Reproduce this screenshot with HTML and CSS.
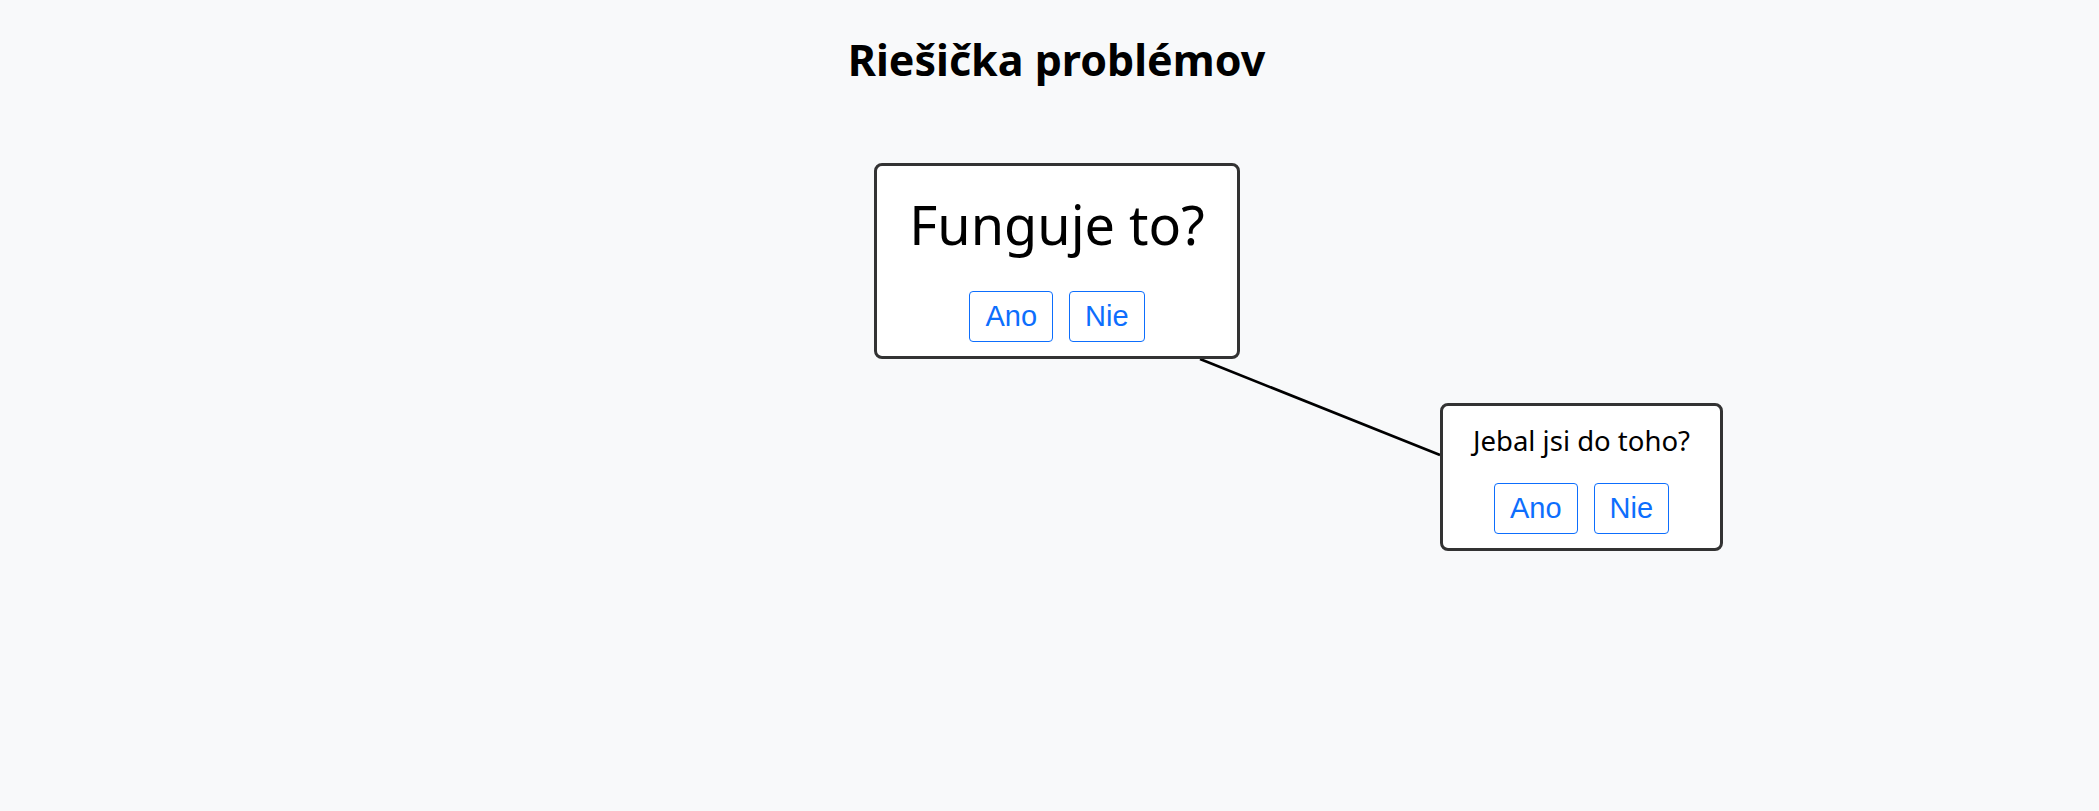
FILE: index.html
```html
<!DOCTYPE html>
<html lang="sk">
<head>
<meta charset="utf-8">
<title>Riešička problémov</title>
<link rel="stylesheet" href="styles.css">
</head>
<body>
<header class="page-header">
  <h1 class="page-title">Riešička problémov</h1>
</header>
<main class="canvas">
  <svg class="edges" width="2099" height="700" viewBox="0 0 2099 700">
    <line x1="1200" y1="359" x2="1440" y2="455" stroke="#000" stroke-width="2.6"/>
  </svg>
  <div class="node node-root">
    <div class="node-question q-large">Funguje to?</div>
    <div class="node-actions">
      <button class="btn-answer">Ano</button>
      <button class="btn-answer">Nie</button>
    </div>
  </div>
  <div class="node node-child">
    <div class="node-question q-small">Jebal jsi do toho?</div>
    <div class="node-actions">
      <button class="btn-answer">Ano</button>
      <button class="btn-answer">Nie</button>
    </div>
  </div>
</main>
</body>
</html>
```
FILE: styles.css
```css
html, body {
  margin: 0;
  padding: 0;
  background: #f8f9fa;
  height: 100%;
  overflow: hidden;
}
body {
  font-family: "Noto Sans", "Open Sans", sans-serif;
  color: #000;
}
.page-header {
  display: flex;
  justify-content: center;
  padding-top: 36px;
  padding-left: 14px;
}
.page-title {
  margin: 0;
  font-family: "Noto Sans", sans-serif;
  font-weight: 700;
  font-size: 43px;
  line-height: 48px;
}
.canvas {
  position: absolute;
  left: 0;
  top: 0;
  width: 2099px;
  height: 811px;
  pointer-events: none;
}
.edges {
  position: absolute;
  left: 0;
  top: 0;
}
.node {
  position: absolute;
  box-sizing: border-box;
  background: #fff;
  border: 3px solid #333;
  border-radius: 8px;
  display: flex;
  flex-direction: column;
  align-items: center;
  pointer-events: auto;
}
.node-root {
  left: 874px;
  top: 163px;
  width: 366px;
  height: 196px;
  padding-top: 28px;
}
.node-child {
  left: 1440px;
  top: 403px;
  width: 283px;
  height: 148px;
  padding-top: 17px;
}
.node-question {
  text-align: center;
  font-weight: 400;
  white-space: nowrap;
}
.q-large {
  font-size: 54px;
  line-height: 60px;
}
.q-small {
  font-size: 27.5px;
  line-height: 36px;
}
.node-actions {
  display: flex;
  gap: 16px;
}
.q-large + .node-actions {
  margin-top: 37px;
}
.q-small + .node-actions {
  margin-top: 24px;
}
.btn-answer {
  font-family: "Liberation Sans", Arial, sans-serif;
  font-size: 29px;
  line-height: 43px;
  padding: 3px 15px;
  color: #0d6efd;
  background: #fff;
  border: 1px solid #0d6efd;
  border-radius: 4px;
  margin: 0;
  cursor: pointer;
}
```
